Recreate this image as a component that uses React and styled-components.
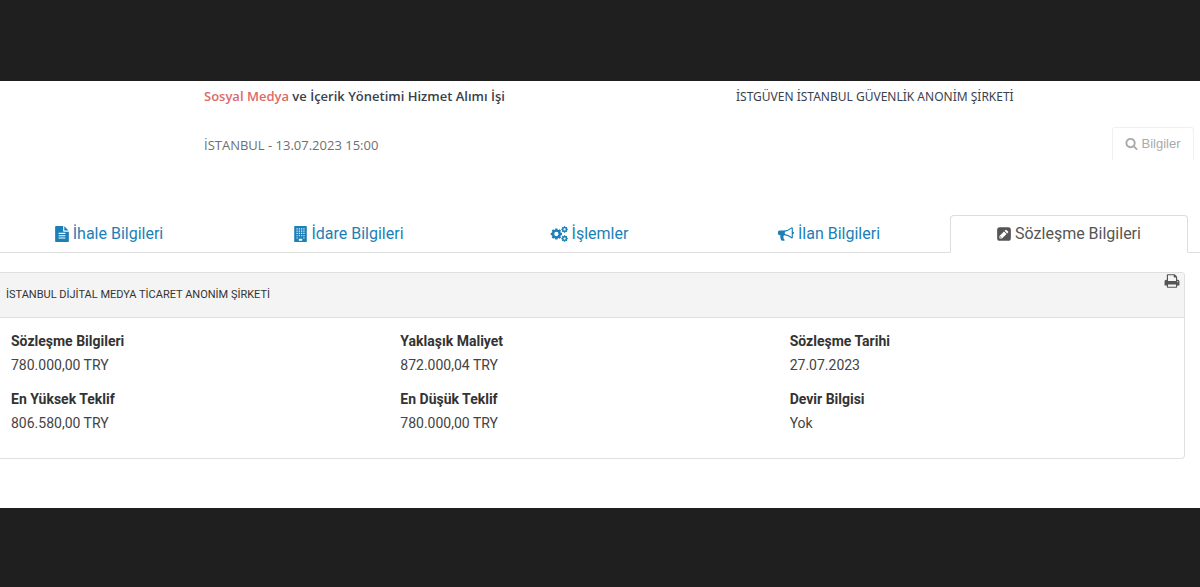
import React from 'react';
import styled, { createGlobalStyle } from 'styled-components';

const GlobalStyle = createGlobalStyle`
    * {
        box-sizing: border-box;
    }
    body {
        margin: 0;
        background: #1f1f1f;
        color: #444;
        font-family: Roboto, "Liberation Sans", sans-serif;
        font-size: 14px;
        line-height: 24px;
    }
`;
const Page = styled.main`
    margin: 81px 0 79px;
    padding-bottom: 49px;
    background: #fff;
    overflow: hidden;
`;
const Summary = styled.header`
    display: grid;
    grid-template-columns: 51fr 133fr 94fr 88px;
    height: 134px;
    font-family: "Open Sans", "Noto Sans", sans-serif;
    font-size: 13px;
    color: #39424c;
`;
const Tender = styled.div`
    grid-column: 2;
    padding-top: 3px;
`;
const Title = styled.h1`
    margin: 0 0 25px;
    font-size: 13px;
    font-weight: 600;
    line-height: 24px;
`;
const Highlight = styled.span`
    color: #dc6a68;
`;
const Place = styled.p`
    margin: 0;
    color: #6c7075;
`;
const Company = styled.p`
    margin: 0;
    padding-top: 4px;
    font-family: "Noto Sans", sans-serif;
    font-size: 12px;
`;
const InfoButton = styled.button`
    align-self: start;
    display: flex;
    align-items: center;
    justify-content: center;
    gap: 3px;
    width: 82px;
    height: 33px;
    margin-top: 46px;
    padding: 0 0 2px;
    border: 1px solid #f0f0f0;
    border-bottom: 0;
    border-radius: 3px 3px 0 0;
    background: #fff;
    color: #aaa;
    font-family: "Liberation Sans", Arial, sans-serif;
    font-size: 13px;
`;
const Tabs = styled.nav`
    display: flex;
    gap: 2px;
    height: 38px;
    margin-left: -10px;
    padding-right: 12px;
    border-bottom: 1px solid #ddd;
`;
const Tab = styled.a`
    flex: 1;
    display: flex;
    align-items: center;
    justify-content: center;
    gap: 4px;
    height: 38px;
    border: 1px solid ${props => props.$active ? '#ddd' : 'transparent'};
    border-bottom-color: ${props => props.$active ? '#fff' : '#ddd'};
    border-radius: ${props => props.$active ? '4px 4px 0 0' : '0'};
    background: ${props => props.$active ? '#fff' : 'none'};
    color: ${props => props.$active ? '#555' : '#1c7fb6'};
    font-size: 16px;
    text-decoration: none;
`;
const Panel = styled.section`
    margin: 19px 15px 0 0;
    border: 1px solid #e0e0e0;
    border-left: 0;
    border-radius: 0 4px 4px 0;
`;
const PanelHead = styled.div`
    display: flex;
    justify-content: space-between;
    height: 45px;
    padding: 0 4px 0 6px;
    border-bottom: 1px solid #e0e0e0;
    border-radius: 0 4px 0 0;
    background: #f4f4f4;
`;
const PanelTitle = styled.h2`
    margin: 0;
    color: #333;
    font-size: 11px;
    font-weight: 400;
    line-height: 43px;
`;
const PrintButton = styled.button`
    align-self: start;
    display: flex;
    padding: 0;
    border: 0;
    background: none;
    color: #555;
`;
const Details = styled.dl`
    display: grid;
    grid-template-columns: repeat(3, 1fr);
    row-gap: 10px;
    margin: 0;
    padding: 11px 5px 23px 11px;
`;
const Label = styled.dt`
    color: #333;
    font-weight: 700;
`;
const Value = styled.dd`
    margin: 0;
`;
const Glyph = styled.svg`
    flex: none;
    fill: currentColor;
`;

// every glyph sits on a 1792 unit tall grid, width trims the sides
const Icon = ({ d, size = 16, width = 1792 }) => (
    <Glyph width={Math.round(size * width / 1792)} height={size} viewBox={`${(1792 - width) / 2} 0 ${width} 1792`} aria-hidden="true">
        <path fillRule="evenodd" d={d} />
    </Glyph>
);

const windows = [256, 512, 768, 1024].map(y =>
    [448, 704, 960, 1216].map(x => `M${x} ${y}h128v128h-128z`).join('')
).join('');

// eight toothed wheel with a round hole
const gear = (cx, cy, outer, inner, hole) => {
    const points = [];
    for (let i = 0; i < 8; i++) {
        const mid = i * Math.PI / 4;
        [[-0.28, inner], [-0.2, outer], [0.2, outer], [0.28, inner]].forEach(([turn, r]) => {
            points.push(`${Math.round(cx + r * Math.cos(mid + turn))} ${Math.round(cy + r * Math.sin(mid + turn))}`);
        });
    }
    return `M${points.join('L')}zM${cx - hole} ${cy}a${hole} ${hole} 0 1 0 ${hole * 2} 0a${hole} ${hole} 0 1 0 ${-hole * 2} 0z`;
};

const icons = {
    search: 'M1216 832q0-185-131.5-316.5t-316.5-131.5-316.5 131.5-131.5 316.5 131.5 316.5 316.5 131.5 316.5-131.5 131.5-316.5zm512 832q0 52-38 90t-90 38q-54 0-90-38l-343-342q-179 124-399 124-143 0-273.5-55.5t-225-150-150-225-55.5-273.5 55.5-273.5 150-225 225-150 273.5-55.5 273.5 55.5 225 150 150 225 55.5 273.5q0 220-124 399l343 343q37 37 37 90z',
    file: 'M1596 476q14 14 28 36h-472v-472q22 14 36 28zm-476 164h544v1056q0 40-28 68t-68 28h-1344q-40 0-68-28t-28-68v-1600q0-40 28-68t68-28h800v544q0 40 28 68t68 28zm160 736v-64q0-14-9-23t-23-9h-704q-14 0-23 9t-9 23v64q0 14 9 23t23 9h704q14 0 23-9t9-23zm0-256v-64q0-14-9-23t-23-9h-704q-14 0-23 9t-9 23v64q0 14 9 23t23 9h704q14 0 23-9t9-23zm0-256v-64q0-14-9-23t-23-9h-704q-14 0-23 9t-9 23v64q0 14 9 23t23 9h704q14 0 23-9t9-23z',
    building: `M256 0h1280q64 0 64 64v1664q0 64-64 64h-1280q-64 0-64-64v-1664q0-64 64-64z${windows}M448 1280h128v128h-128zM1216 1280h128v128h-128zM704 1440h384v224h-384z`,
    cogs: gear(600, 896, 640, 510, 240) + gear(1520, 384, 370, 290, 125) + gear(1520, 1408, 370, 290, 125),
    bullhorn: 'M1664 640q53 0 90.5 37.5t37.5 90.5-37.5 90.5-90.5 37.5v384q0 52-38 90t-90 38q-417-347-812-380-58 19-91 66t-31 100.5 40 92.5q-20 33-23 65.5t6 58 33.5 55 48 50 61.5 50.5q-29 58-111.5 83t-168.5 11.5-132-55.5q-7-23-29.5-87.5t-32-94.5-23-89-15-101 3.5-98.5 22-110.5h-122q-66 0-113-47t-47-113v-192q0-66 47-113t113-47h480q435 0 896-384 52 0 90 38t38 90v384zm-128 604v-954q-394 302-768 343v270q377 42 768 341z',
    pencil: 'M416 128h960q288 0 288 288v960q0 288-288 288h-960q-288 0-288-288v-960q0-288 288-288zM384 1120v288h288l512-512-288-288zM960 544l288 288 110-110q50-50 0-100l-188-188q-50-50-100 0zM504 1160l128 128-40 40h-64v-64h-64v-64z',
    print: 'M448 1536h896v-256h-896v256zm0-640h896v-384h-160q-40 0-68-28t-28-68v-160h-640v640zm1152 64q0-26-19-45t-45-19-45 19-19 45 19 45 45 19 45-19 19-45zm128 0v416q0 13-9.5 22.5t-22.5 9.5h-224v160q0 40-28 68t-68 28h-960q-40 0-68-28t-28-68v-160h-224q-13 0-22.5-9.5t-9.5-22.5v-416q0-79 56.5-135.5t135.5-56.5h64v-544q0-40 28-68t68-28h672q40 0 88 20t76 48l152 152q28 28 48 76t20 88v256h64q79 0 135.5 56.5t56.5 135.5z'
};

const tabs = [
    { text: 'İhale Bilgileri', icon: <Icon d={icons.file} width={1568} /> },
    { text: 'İdare Bilgileri', icon: <Icon d={icons.building} width={1456} /> },
    { text: 'İşlemler', icon: <Icon d={icons.cogs} width={2016} /> },
    { text: 'İlan Bilgileri', icon: <Icon d={icons.bullhorn} /> },
    { text: 'Sözleşme Bilgileri', icon: <Icon d={icons.pencil} width={1568} />, active: true }
];

const details = [
    ['Sözleşme Bilgileri', '780.000,00 TRY'],
    ['Yaklaşık Maliyet', '872.000,04 TRY'],
    ['Sözleşme Tarihi', '27.07.2023'],
    ['En Yüksek Teklif', '806.580,00 TRY'],
    ['En Düşük Teklif', '780.000,00 TRY'],
    ['Devir Bilgisi', 'Yok']
];

function App() {
    return (
        <>
            <GlobalStyle />
            <Page lang="tr">
                <Summary>
                    <Tender>
                        <Title><Highlight>Sosyal Medya</Highlight> ve İçerik Yönetimi Hizmet Alımı İşi</Title>
                        <Place>İSTANBUL - 13.07.2023 15:00</Place>
                    </Tender>
                    <Company>İSTGÜVEN İSTANBUL GÜVENLİK ANONİM ŞİRKETİ</Company>
                    <InfoButton type="button">
                        <Icon d={icons.search} size={13} />
                        Bilgiler
                    </InfoButton>
                </Summary>
                <Tabs>
                    {tabs.map(tab => (
                        <Tab key={tab.text} href="#" $active={tab.active} aria-current={tab.active ? 'page' : undefined}>
                            {tab.icon}
                            <span>{tab.text}</span>
                        </Tab>
                    ))}
                </Tabs>
                <Panel>
                    <PanelHead>
                        <PanelTitle>İSTANBUL DİJİTAL MEDYA TİCARET ANONİM ŞİRKETİ</PanelTitle>
                        <PrintButton type="button" aria-label="Yazdır">
                            <Icon d={icons.print} />
                        </PrintButton>
                    </PanelHead>
                    <Details>
                        {details.map(([label, value]) => (
                            <div key={label}>
                                <Label>{label}</Label>
                                <Value>{value}</Value>
                            </div>
                        ))}
                    </Details>
                </Panel>
            </Page>
        </>
    );
}

export default App;
